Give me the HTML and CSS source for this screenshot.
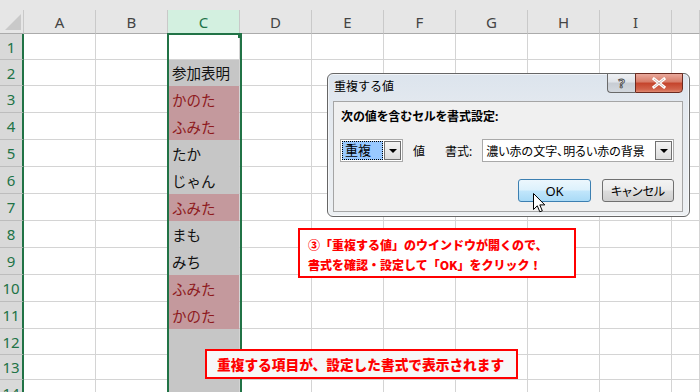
FILE: index.html
```html
<!DOCTYPE html>
<html lang="ja">
<head>
<meta charset="utf-8">
<title>重複する値</title>
<link rel="stylesheet" href="styles.css">
</head>
<body>
<div class="sheet">
  <div class="band"></div>
  <div class="ch corner"><svg width="24" height="24" viewBox="0 0 24 24"><polygon points="5,20 21,4 21,20" fill="#c9c9c9"/></svg></div>
  <div class="ch">A</div><div class="ch">B</div><div class="ch on">C</div><div class="ch">D</div><div class="ch">E</div><div class="ch">F</div><div class="ch">G</div><div class="ch">H</div><div class="ch">I</div><div class="ch"></div>

  <div class="rh">1</div><div class="c"></div><div class="c"></div><div class="c"></div><div class="c"></div><div class="c"></div><div class="c"></div><div class="c"></div><div class="c"></div><div class="c"></div><div class="c"></div>
  <div class="rh">2</div><div class="c"></div><div class="c"></div><div class="c s">参加表明</div><div class="c"></div><div class="c"></div><div class="c"></div><div class="c"></div><div class="c"></div><div class="c"></div><div class="c"></div>
  <div class="rh">3</div><div class="c"></div><div class="c"></div><div class="c s p">かのた</div><div class="c"></div><div class="c"></div><div class="c"></div><div class="c"></div><div class="c"></div><div class="c"></div><div class="c"></div>
  <div class="rh">4</div><div class="c"></div><div class="c"></div><div class="c s p">ふみた</div><div class="c"></div><div class="c"></div><div class="c"></div><div class="c"></div><div class="c"></div><div class="c"></div><div class="c"></div>
  <div class="rh">5</div><div class="c"></div><div class="c"></div><div class="c s">たか</div><div class="c"></div><div class="c"></div><div class="c"></div><div class="c"></div><div class="c"></div><div class="c"></div><div class="c"></div>
  <div class="rh">6</div><div class="c"></div><div class="c"></div><div class="c s">じゃん</div><div class="c"></div><div class="c"></div><div class="c"></div><div class="c"></div><div class="c"></div><div class="c"></div><div class="c"></div>
  <div class="rh">7</div><div class="c"></div><div class="c"></div><div class="c s p">ふみた</div><div class="c"></div><div class="c"></div><div class="c"></div><div class="c"></div><div class="c"></div><div class="c"></div><div class="c"></div>
  <div class="rh">8</div><div class="c"></div><div class="c"></div><div class="c s">まも</div><div class="c"></div><div class="c"></div><div class="c"></div><div class="c"></div><div class="c"></div><div class="c"></div><div class="c"></div>
  <div class="rh">9</div><div class="c"></div><div class="c"></div><div class="c s">みち</div><div class="c"></div><div class="c"></div><div class="c"></div><div class="c"></div><div class="c"></div><div class="c"></div><div class="c"></div>
  <div class="rh">10</div><div class="c"></div><div class="c"></div><div class="c s p">ふみた</div><div class="c"></div><div class="c"></div><div class="c"></div><div class="c"></div><div class="c"></div><div class="c"></div><div class="c"></div>
  <div class="rh">11</div><div class="c"></div><div class="c"></div><div class="c s p">かのた</div><div class="c"></div><div class="c"></div><div class="c"></div><div class="c"></div><div class="c"></div><div class="c"></div><div class="c"></div>
  <div class="rh">12</div><div class="c"></div><div class="c"></div><div class="c s"></div><div class="c"></div><div class="c"></div><div class="c"></div><div class="c"></div><div class="c"></div><div class="c"></div><div class="c"></div>
  <div class="rh">13</div><div class="c"></div><div class="c"></div><div class="c s"></div><div class="c"></div><div class="c"></div><div class="c"></div><div class="c"></div><div class="c"></div><div class="c"></div><div class="c"></div>
  <div class="rh">14</div><div class="c"></div><div class="c"></div><div class="c s"></div><div class="c"></div><div class="c"></div><div class="c"></div><div class="c"></div><div class="c"></div><div class="c"></div><div class="c"></div>
</div>

<div class="selbox"><div class="handle"></div></div>

<div class="dialog">
  <div class="title">重複する値</div>
  <div class="tbtns">
    <div class="tb help">?</div>
    <div class="tb close"><svg width="16" height="12" viewBox="0 0 16 12"><path d="M3 2 L13 10 M13 2 L3 10" stroke="#fff" stroke-width="3" stroke-linecap="square"/><path d="M3 2 L13 10 M13 2 L3 10" stroke="#5a1a10" stroke-width="0.6" opacity="0.5"/></svg></div>
  </div>
  <div class="panel">
    <div class="lbl">次の値を含むセルを書式設定:</div>
    <div class="ctrls">
      <div class="combo c1"><span class="seltext">重複</span><span class="dd"><i class="arrow"></i></span></div>
      <span class="w1">値</span>
      <span class="w2">書式:</span>
      <div class="combo c2"><span class="val">濃い赤の文字、明るい赤の背景</span><span class="dd"><i class="arrow"></i></span></div>
    </div>
    <div class="btns">
      <div class="btn ok">OK</div>
      <div class="btn cancel">キャンセル</div>
    </div>
  </div>
</div>

<svg class="cursor" width="13" height="21" viewBox="0 0 13 21"><path d="M0.5 0.5 L0.5 16.5 L4.3 12.8 L6.8 18.8 L9.3 17.8 L6.8 11.9 L11.8 11.9 Z" fill="#fff" stroke="#000" stroke-width="1"/></svg>

<div class="note n1">③「重複する値」のウインドウが開くので、<br>書式を確認・設定して「OK」をクリック！</div>
<div class="note n2">重複する項目が、設定した書式で表示されます</div>
</body>
</html>
```
FILE: styles.css
```css
body {
  margin: 0;
  width: 700px;
  height: 392px;
  overflow: hidden;
  background: #fff;
  position: relative;
  font-family: "Noto Sans", "Noto Sans CJK JP", sans-serif;
}
.sheet {
  display: grid;
  grid-template-columns: 24px repeat(9, 72px) 1fr;
  grid-template-rows: 10px 24px 26px 26px repeat(9, 27px) 26px 25px 27px;
}
.band { grid-column: 1 / -1; background: #e6e6e6; }
.ch {
  box-sizing: border-box;
  background: #e6e6e6;
  border-right: 1px solid #c9c9c9;
  border-bottom: 1px solid #ababab;
  display: flex;
  align-items: center;
  justify-content: center;
  font-size: 15px;
  color: #444;
}
.ch.corner { display: block; }
.ch.corner svg { display: block; }
.ch.on { background: #d3f0e0; color: #217346; }
.rh {
  box-sizing: border-box;
  background: #d9d9d9;
  border-right: 2px solid #217346;
  border-bottom: 1px solid #bdbdbd;
  display: flex;
  align-items: center;
  justify-content: center;
  font-size: 15px;
  color: #217346;
}
.c {
  box-sizing: border-box;
  border-right: 1px solid #d4d4d4;
  border-bottom: 1px solid #d4d4d4;
}
.s {
  background: #c6c6c6;
  border-bottom-color: #c6c6c6;
  display: flex;
  align-items: center;
  padding-left: 4px;
  font-family: "Noto Sans CJK JP", sans-serif;
  font-size: 14.5px;
  color: #111;
  white-space: nowrap;
}
.s.p { background: #c4999d; border-bottom-color: #c4999d; color: #8e1a20; }

.selbox {
  position: absolute;
  left: 167px;
  top: 33px;
  width: 75px;
  height: 380px;
  box-sizing: border-box;
  border: 2px solid #217346;
}
.handle {
  position: absolute;
  right: -2px;
  top: -1px;
  width: 4px;
  height: 4px;
  background: #217346;
}

.dialog {
  position: absolute;
  left: 327px;
  top: 73px;
  width: 363px;
  height: 144px;
  box-sizing: border-box;
  border: 1px solid #666;
  border-radius: 6px;
  background: linear-gradient(to bottom, #dce4ed 0%, #e4e9ef 25%, #edf0f3 100%);
  box-shadow: inset 0 0 0 1px rgba(255,255,255,0.6);
}
.title {
  padding: 5px 0 0 6px;
  font-size: 12px;
  line-height: 16px;
  height: 22px;
  box-sizing: border-box;
  color: #000;
}
.tbtns {
  position: absolute;
  left: 279px;
  top: -1px;
  display: flex;
}
.tb {
  box-sizing: border-box;
  height: 20px;
  border: 1px solid #6a6a6a;
  display: flex;
  align-items: center;
  justify-content: center;
}
.tb.help {
  width: 28px;
  border-radius: 0 0 0 4px;
  border-right: none;
  background: linear-gradient(to bottom, #eef0f3 0%, #dfe3e8 45%, #c7ccd3 50%, #d3d8de 100%);
  font-size: 13px;
  font-weight: bold;
  color: #eee;
  -webkit-text-stroke: 0.9px #505050;
}
.tb.close {
  width: 48px;
  border-radius: 0 0 4px 0;
  border-color: #6b2a20;
  background: linear-gradient(to bottom, #e9a99c 0%, #d77a66 45%, #c4432b 50%, #d1624a 85%, #e08a72 100%);
}
.tb.close svg { display: block; }
.panel {
  margin-left: 5px;
  margin-top: 5px;
  width: 350px;
  height: 111px;
  box-sizing: border-box;
  border: 1px solid #a5a5a5;
  background: #f0f0f0;
  padding: 7px 8px 0 6px;
  font-size: 12px;
  font-feature-settings: "palt";
}
.lbl {
  font-weight: bold;
  line-height: 16px;
  margin-left: 1px;
  color: #000;
}
.ctrls {
  display: flex;
  align-items: center;
  margin-top: 14px;
  height: 23px;
  white-space: nowrap;
}
.combo {
  box-sizing: border-box;
  height: 23px;
  border: 1px solid #a9a9a9;
  background: #fff;
  display: flex;
  align-items: center;
  position: relative;
  flex-shrink: 0;
}
.c1 { width: 63px; }
.c2 { width: 192px; margin-left: 10px; }
.seltext {
  margin-left: 1px;
  width: 41px;
  height: 19px;
  box-sizing: border-box;
  border: 1px dotted #000;
  background: #99c9ff;
  font-size: 13px;
  line-height: 17px;
  padding-left: 2px;
}
.val {
  padding-left: 3px;
  font-size: 12px;
  flex: 1;
  white-space: nowrap;
}
.dd {
  position: absolute;
  right: 1px;
  top: 1px;
  width: 17px;
  height: 19px;
  box-sizing: border-box;
  border: 1px solid #707070;
  background: linear-gradient(to bottom, #f4f4f4, #dcdcdc);
  display: flex;
  align-items: center;
  justify-content: center;
}
.arrow {
  width: 0;
  height: 0;
  border-left: 4px solid transparent;
  border-right: 4px solid transparent;
  border-top: 4px solid #000;
}
.w1 { margin-left: 10px; font-size: 12px; flex-shrink: 0; }
.w2 { margin-left: 20px; font-size: 12px; flex-shrink: 0; white-space: nowrap; }
.btns {
  display: flex;
  justify-content: flex-end;
  gap: 11px;
  margin-top: 17px;
}
.btn {
  box-sizing: border-box;
  height: 23px;
  border-radius: 3px;
  display: flex;
  align-items: center;
  justify-content: center;
  color: #000;
}
.btn.ok {
  width: 73px;
  border: 1px solid #3c7fb1;
  background: linear-gradient(to bottom, #ecf7fd 0%, #dcf1fc 48%, #c1e6fb 52%, #a9daf6 100%);
  font-size: 13px;
}
.btn.cancel {
  width: 72px;
  border: 1px solid #707070;
  background: linear-gradient(to bottom, #f3f3f3 0%, #ebebeb 48%, #dddddd 52%, #cfcfcf 100%);
  font-size: 12px;
}
.cursor {
  position: absolute;
  left: 533px;
  top: 193px;
}
.note {
  position: absolute;
  box-sizing: border-box;
  border: 2px solid #ff0000;
  color: #ff0000;
  font-family: "Noto Sans CJK JP", sans-serif;
  font-weight: 900;
  white-space: nowrap;
}
.n1 {
  left: 298px;
  top: 228px;
  width: 278px;
  height: 50px;
  background: #fff;
  padding: 5px 0 0 8px;
  font-size: 12px;
  line-height: 20px;
}
.n2 {
  left: 205px;
  top: 349px;
  width: 313px;
  height: 30px;
  background: #f7f7f7;
  padding-left: 10px;
  font-size: 13.7px;
  line-height: 26px;
}
```
